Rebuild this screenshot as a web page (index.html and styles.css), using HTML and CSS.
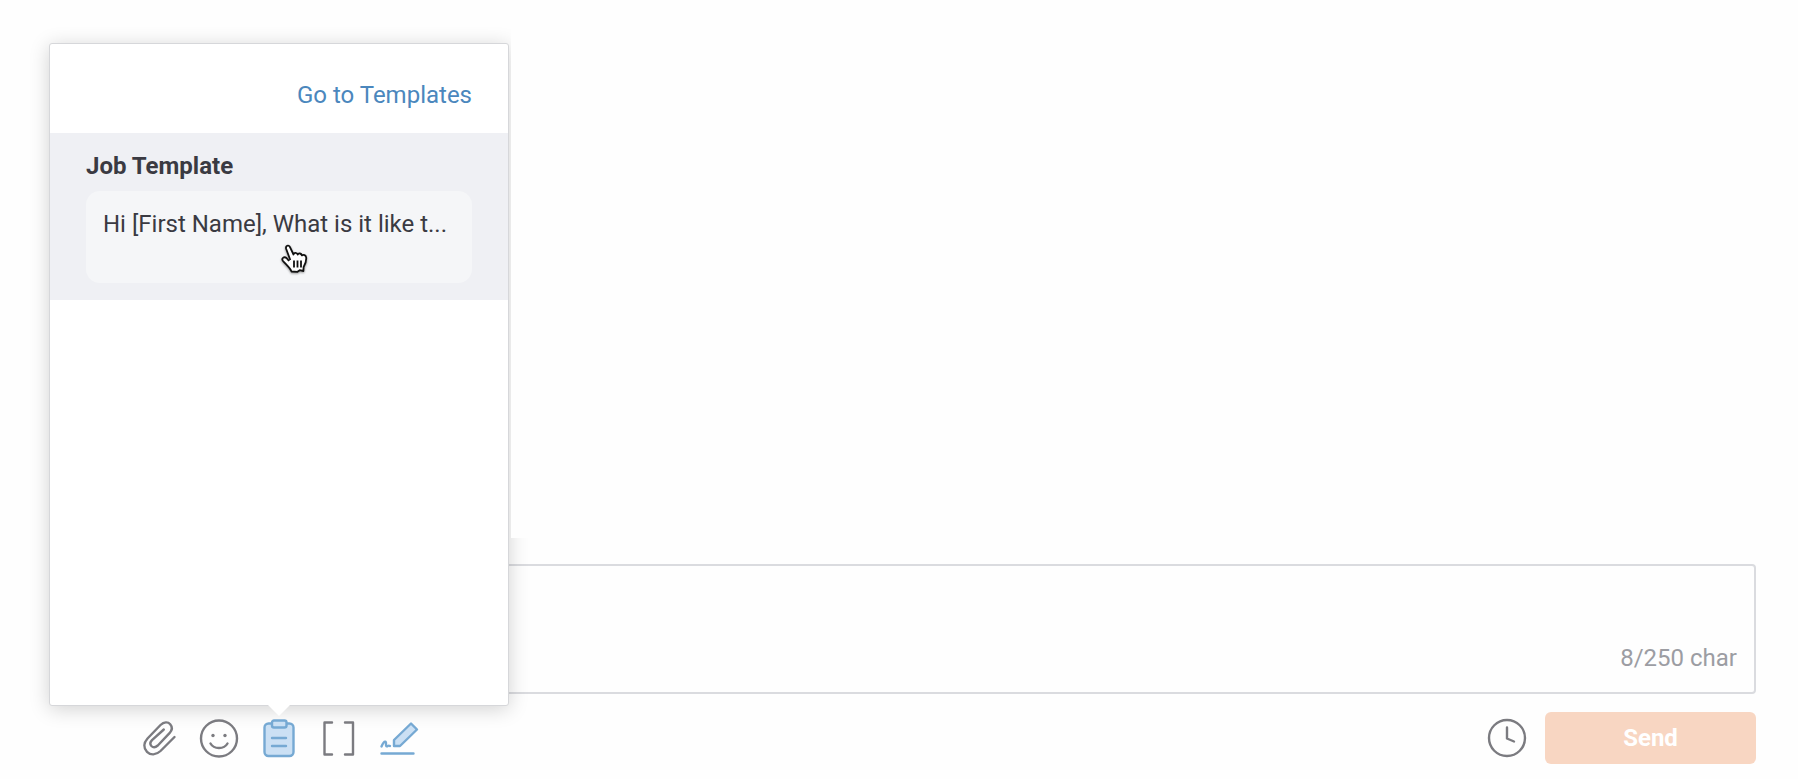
FILE: index.html
```html
<!DOCTYPE html>
<html lang="en">
<head>
  <meta charset="UTF-8">
  <title>Messages</title>
  <link rel="stylesheet" href="styles.css">
</head>
<body>
  <main class="thread"></main>

  <form class="composer">
    <div class="message-box">
      <textarea class="message-input" aria-label="Message"></textarea>
      <span class="char-count">8/250 char</span>
    </div>

    <div class="toolbar">
      <div class="tools">
        <button type="button" class="tool" aria-label="Attach file">
          <svg width="40" height="40" viewBox="0 0 40 40">
            <path d="M35.500 19 L21.500 33 C17 37.300 11.500 37.300 8 33.800 C4.300 30 4.500 25 8.500 20.500 L21.500 7 C25 3.700 29 3.700 31.200 6.200 C33.500 8.800 33.300 12 30.500 15.200 L18.800 27.500 C16.500 29.600 14 29.600 12.400 28 C10.900 26.400 11 24.300 13 22.200 L24.800 11.500" />
          </svg>
        </button>
        <button type="button" class="tool" aria-label="Insert emoji">
          <svg width="40" height="40" viewBox="0 0 40 40">
            <circle cx="20" cy="20.500" r="18" />
            <circle class="dot" cx="14" cy="17.500" r="1.700" />
            <circle class="dot" cx="26" cy="17.500" r="1.700" />
            <path d="M11.500 25.500 C15 31.500 25 31.500 28.500 25.500" />
          </svg>
        </button>
        <button type="button" class="tool tool-blue" aria-label="Templates">
          <svg width="40" height="40" viewBox="0 0 40 40">
            <rect class="fill" x="5.500" y="5.500" width="29" height="32.500" rx="4" />
            <rect class="fill" x="13" y="2.500" width="14.500" height="7" rx="2" />
            <path d="M13 20 H27 M13 28 H27" />
          </svg>
        </button>
        <button type="button" class="tool" aria-label="Insert field">
          <svg width="40" height="40" viewBox="0 0 40 40">
            <path d="M13 4.500 H5.500 V36.500 H13 M26 4.500 H34 V36.500 H26" />
          </svg>
        </button>
        <button type="button" class="tool tool-blue" aria-label="Add signature">
          <svg width="40" height="40" viewBox="0 0 40 40">
            <path class="fill" d="M15 22 L32 5.500 L38 11.500 L21 28 H15 Z" />
            <path d="M2.500 28.500 C3.500 26 5 23.500 6.200 23.700 C8 24 6 28 7.800 28.300 C9 28.400 9 26.800 11 28 M2.500 35.500 H34.500" />
          </svg>
        </button>
      </div>

      <div class="actions">
        <button type="button" class="tool" aria-label="Schedule">
          <svg width="40" height="40" viewBox="0 0 40 40">
            <circle cx="20" cy="20" r="18" />
            <path d="M20 9.500 V20.500 L27 23.500" />
          </svg>
        </button>
        <button type="submit" class="send">Send</button>
      </div>
    </div>

    <section class="popup">
      <div class="popup-header">
        <a href="#" class="popup-link">Go to Templates</a>
      </div>
      <button type="button" class="template">
        <span class="template-name">Job Template</span>
        <span class="template-text">Hi [First Name], What is it like t...</span>
        <svg class="cursor" width="30" height="34" viewBox="0 0 30 34">
          <path d="M10.300 18 L6.200 7 C5.200 3.800 8.600 2.200 10 5.200 L13.500 12.500 C14 10.200 17 10.400 17.700 12.600 C18.600 10.700 21.300 11.300 21.900 13.400 C23.600 12.200 26 13.200 26.200 15.500 C26.500 19.500 25.600 21.800 23.600 25 L23.400 29 L19.700 28.200 L17.500 29.800 L11.500 29.500 C10 25.800 6.500 23 3 19 C1 16.500 4 14.200 6.500 16 L9 19" />
          <path class="fingers" d="M14 18.500 V25.500 M17.500 18.500 V25.500 M21 18.500 V25.500" />
        </svg>
      </button>
    </section>
  </form>
</body>
</html>
```
FILE: styles.css
```css
* {
  box-sizing: border-box;
}
body {
  margin: 0;
  min-height: 100vh;
  display: flex;
  flex-direction: column;
  background-color: #fefefe;
  color: #3a3a42;
  font-family: Roboto, sans-serif;
  font-size: 24px;
  line-height: 32px;
}
button {
  border: none;
  font: inherit;
  color: inherit;
  cursor: pointer;
}

/* sits over the popup so its shadow stops at the thread */
.thread {
  flex: 1;
  position: relative;
  z-index: 2;
  margin-left: 511px;
  background-color: #fefefe;
}

.composer {
  position: relative;
  padding: 26px 42px 15px 49px;
}
.message-box {
  position: relative;
  display: flex;
}
.message-input {
  flex: 1;
  height: 130px;
  padding: 16px;
  border: 2px solid #dadbdf;
  border-radius: 4px;
  background-color: #fefefe;
  font: inherit;
  resize: none;
}
.char-count {
  position: absolute;
  right: 19px;
  bottom: 20px;
  color: #9c9da3;
}

.toolbar {
  display: flex;
  justify-content: space-between;
  align-items: center;
  margin-top: 18px;
  padding-left: 90px;
}
.tools {
  display: flex;
  gap: 20px;
}
.actions {
  display: flex;
  align-items: center;
  gap: 18px;
}
.tool {
  position: relative;
  z-index: 1;
  display: flex;
  padding: 0;
  background: none;
}
.tool svg {
  fill: none;
  stroke: #7b7b80;
  stroke-width: 2.4;
  stroke-linecap: round;
  stroke-linejoin: round;
}
.tool .dot {
  fill: #7b7b80;
  stroke: none;
}
.tool-blue svg {
  stroke: #76a9d3;
}
.tool-blue .fill {
  fill: #cbe0f4;
}
.send {
  width: 211px;
  height: 52px;
  border-radius: 6px;
  background-color: #f8d6c2;
  color: #fff;
  font-weight: bold;
}

.popup {
  position: absolute;
  left: 49px;
  bottom: 73px;
  width: 460px;
  height: 663px;
  border: 1px solid #d6d7da;
  border-radius: 3px;
  background-color: #fff;
  box-shadow: 0 3px 20px rgba(0, 0, 0, 0.18);
}
.popup::after {
  content: "";
  position: absolute;
  top: 100%;
  left: 50%;
  border: 11px solid transparent;
  border-top-color: #fff;
  transform: translateX(-50%);
}
.popup-header {
  padding: 35px 36px 22px;
  text-align: right;
}
.popup-link {
  color: #4b87bd;
  text-decoration: none;
}
.template {
  position: relative;
  display: flex;
  flex-direction: column;
  gap: 9px;
  width: 100%;
  padding: 17px 36px;
  background-color: #eff0f4;
  text-align: left;
}
.template-name {
  font-weight: bold;
}
.template-text {
  height: 92px;
  padding: 17px;
  border-radius: 14px;
  background-color: #f5f6f8;
  white-space: nowrap;
}
.cursor {
  position: absolute;
  left: 230px;
  top: 109px;
  fill: #fff;
  stroke: #111;
  stroke-width: 1.8;
  stroke-linejoin: round;
  filter: drop-shadow(0 1px 1px rgba(0, 0, 0, 0.4));
}
```
